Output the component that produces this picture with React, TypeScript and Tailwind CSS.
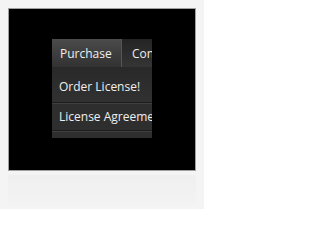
export default function App() {
  const font = { fontFamily: '"Open Sans", "Noto Sans", sans-serif' };
  return (
    <div className="w-[204px] h-[209px] bg-[#f4f4f4] pt-[8px] pl-[8px]" style={font}>
      <div className="w-[188px] h-[163px] border border-[#a0a0a0] bg-black pl-[43px] pt-[30px]">
        <div className="w-[100px] h-[99px] overflow-hidden bg-[#2c2c2c] flex flex-col text-[12px] text-[#efefef]">
          <div className="h-[28px] flex shrink-0 bg-gradient-to-b from-[#242424] to-[#353535]">
            <div className="w-[69px] flex items-center pl-[8px] pt-px shrink-0 bg-gradient-to-b from-[#4b4b4b] to-[#323232]">
              Purchase
            </div>
            <div className="w-px shrink-0 bg-[#555555]" />
            <div className="flex items-center pl-[10px] pt-px whitespace-nowrap">Contact</div>
          </div>
          <div className="h-[35px] flex items-center pl-[7px] pt-[5px] shrink-0 bg-gradient-to-b from-[#292929] to-[#313131] whitespace-nowrap">
            Order License!
          </div>
          <div className="h-px bg-[#1c1c1c] shrink-0" />
          <div className="h-px bg-[#404040] shrink-0" />
          <div className="h-[26px] flex items-center pl-[7px] shrink-0 bg-[#2e2e2e] whitespace-nowrap">
            License Agreement
          </div>
          <div className="h-px bg-[#1c1c1c] shrink-0" />
          <div className="h-px bg-[#404040] shrink-0" />
          <div className="flex-1 bg-[#2e2e2e]" />
        </div>
      </div>
      {/* faint reflection under the frame */}
      <div className="w-[188px] h-[30px] mt-[4px] bg-gradient-to-b from-[#efefef] to-[#f3f3f3]" />
    </div>
  );
}
